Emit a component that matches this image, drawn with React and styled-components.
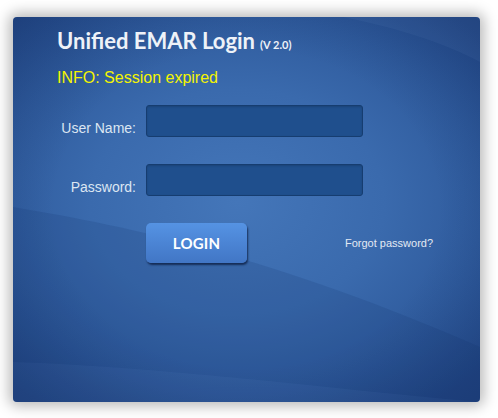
import React from "react";
import styled, { createGlobalStyle } from "styled-components";

const Global = createGlobalStyle`
  html, body { margin: 0; padding: 0; background: #ffffff; }
  body { width: 498px; height: 418px; overflow: hidden; }
  * { box-sizing: border-box; }
`;

const Page = styled.div`
  padding: 17px 18px 16px 13px;
`;

const Panel = styled.div`
  position: relative;
  width: 467px;
  height: 385px;
  border-radius: 4px;
  overflow: hidden;
  background: radial-gradient(ellipse 70% 65% at 48% 48%, #4476b9 0%, #3a6aad 45%, #2f5b9d 75%, #254c8d 100%);
  box-shadow: 0 0 14px 4px rgba(0, 0, 0, 0.28);
`;

const Decor = styled.svg`
  position: absolute;
  inset: 0;
  width: 100%;
  height: 100%;
  pointer-events: none;
`;

const Content = styled.div`
  position: relative;
  display: flex;
  flex-direction: column;
  padding: 10px 0 0 44px;
`;

const Title = styled.h1`
  margin: 0;
  font-family: Lato, "Open Sans", sans-serif;
  font-weight: 700;
  font-size: 22px;
  line-height: 28px;
  color: #eef2f8;
  display: flex;
  align-items: baseline;
  gap: 5px;
`;

const Version = styled.span`
  font-size: 11px;
  font-weight: 700;
`;

const Info = styled.div`
  margin-top: 9px;
  font-family: "Liberation Sans", Arial, sans-serif;
  font-size: 16px;
  line-height: 20px;
  color: #f4f400;
`;

const Form = styled.div`
  margin-top: 17px;
  display: grid;
  grid-template-columns: 79px 217px;
  column-gap: 10px;
  row-gap: 27px;
`;

const Label = styled.label`
  align-self: end;
  text-align: right;
  font-family: "Liberation Sans", Arial, sans-serif;
  font-size: 14px;
  line-height: 16px;
  color: #dce6f2;
  padding-bottom: 1px;
`;

const Input = styled.input`
  width: 217px;
  height: 32px;
  border: 1px solid #163d70;
  border-radius: 3px;
  background: #1f4f8d;
  box-shadow: inset 0 1px 2px rgba(0, 0, 0, 0.15);
  outline: none;
`;

const Actions = styled.div`
  margin-top: 27px;
  margin-left: 89px;
  display: flex;
  align-items: center;
`;

const LoginButton = styled.button`
  width: 101px;
  height: 40px;
  border: none;
  border-radius: 5px;
  background: linear-gradient(to bottom, #5593e3 0%, #4a83d3 55%, #4176c5 100%);
  box-shadow: 1px 2px 2px rgba(10, 25, 60, 0.75);
  color: #ffffff;
  font-family: Lato, "Open Sans", sans-serif;
  font-weight: 700;
  font-size: 15px;
  letter-spacing: 0.2px;
  cursor: pointer;
`;

const Forgot = styled.a`
  margin-left: 98px;
  font-family: "Liberation Sans", Arial, sans-serif;
  font-size: 11px;
  color: #e2e9f3;
  text-decoration: none;
`;

export default function App() {
  return (
    <>
      <Global />
      <Page>
        <Panel>
          <Decor viewBox="0 0 467 385" preserveAspectRatio="none">
            <defs>
              <radialGradient id="vig" cx="0.5" cy="0.5" r="0.75">
                <stop offset="0.55" stopColor="#0d2455" stopOpacity="0" />
                <stop offset="1" stopColor="#0d2455" stopOpacity="0.35" />
              </radialGradient>
            </defs>
            <path d="M0 190 C 120 210, 260 240, 467 330 L 467 385 L 0 385 Z" fill="#12306a" opacity="0.16" />
            <path d="M0 345 C 150 350, 300 370, 467 385 L 0 385 Z" fill="#5a86c4" opacity="0.12" />
            <path d="M330 0 C 380 10, 430 25, 467 45 L 467 0 Z" fill="#6a95d0" opacity="0.12" />
            <rect x="0" y="0" width="467" height="385" fill="url(#vig)" />
          </Decor>
          <Content>
            <Title>
              Unified EMAR Login <Version>(V 2.0)</Version>
            </Title>
            <Info>INFO: Session expired</Info>
            <Form>
              <Label htmlFor="user">User Name:</Label>
              <Input id="user" type="text" />
              <Label htmlFor="pass">Password:</Label>
              <Input id="pass" type="password" />
            </Form>
            <Actions>
              <LoginButton>LOGIN</LoginButton>
              <Forgot href="#">Forgot password?</Forgot>
            </Actions>
          </Content>
        </Panel>
      </Page>
    </>
  );
}
